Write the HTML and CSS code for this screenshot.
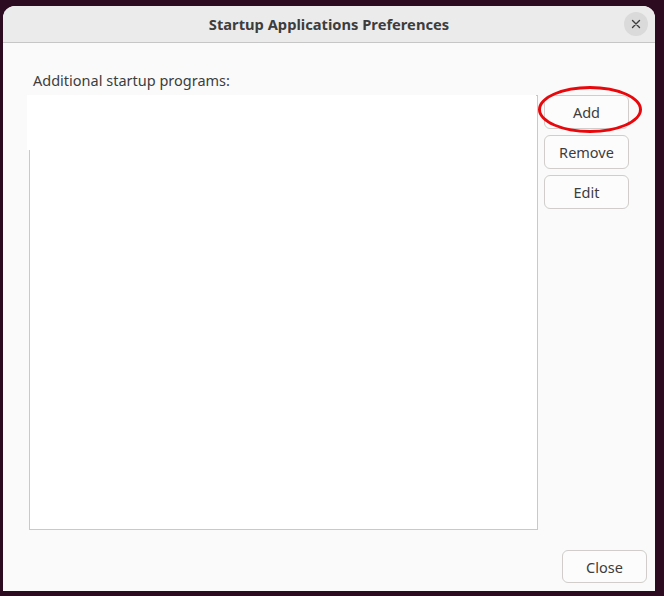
FILE: index.html
```html
<!DOCTYPE html>
<html>
<head>
<meta charset="utf-8">
<link rel="stylesheet" href="styles.css">
</head>
<body>
<div class="window">
  <div class="header">
    <div class="title">Startup Applications Preferences</div>
    <button class="wclose" aria-label="Close">
      <svg width="10" height="10" viewBox="0 0 10 10"><path d="M1.5 1.5 L8.5 8.5 M8.5 1.5 L1.5 8.5" stroke="#3d3d3d" stroke-width="1.4" stroke-linecap="round"/></svg>
    </button>
  </div>
  <div class="main">
    <div class="label">Additional startup programs:</div>
    <div class="row">
      <div class="list"></div>
      <div class="buttons">
        <button class="btn">Add</button>
        <button class="btn">Remove</button>
        <button class="btn">Edit</button>
      </div>
    </div>
  </div>
  <div class="footer">
    <button class="btn">Close</button>
  </div>
  <div class="patch"></div>
  <div class="ring"></div>
</div>
</body>
</html>
```
FILE: styles.css
```css
html, body {
  margin: 0;
  padding: 0;
}
body {
  background: #2c0b20;
  width: 664px;
  height: 596px;
  overflow: hidden;
  font-family: "Noto Sans", "DejaVu Sans", sans-serif;
  color: #3d3d3d;
}
.window {
  position: relative;
  margin: 6px 0 0 3px;
  width: 652px;
  height: 585px;
  background: #fafafa;
  border-radius: 12px 12px 0 0;
  display: flex;
  flex-direction: column;
  overflow: hidden;
}
.header {
  height: 36px;
  background: #ebebeb;
  border-bottom: 1px solid #c6c6c6;
  display: flex;
  align-items: center;
  justify-content: center;
  position: relative;
  flex: none;
}
.title {
  font-weight: bold;
  font-size: 14.7px;
  color: #3d3d3d;
}
.wclose {
  position: absolute;
  right: 7px;
  top: 6px;
  width: 24px;
  height: 24px;
  border-radius: 50%;
  border: none;
  background: #dadada;
  padding: 0;
  display: flex;
  align-items: center;
  justify-content: center;
}
.main {
  flex: 1;
  padding: 29px 26px 0 26px;
  display: flex;
  flex-direction: column;
  gap: 6px;
}
.label {
  font-size: 14.5px;
  line-height: 17px;
  padding-left: 4px;
}
.row {
  flex: 1;
  display: flex;
  gap: 6px;
}
.list {
  width: 507px;
  height: 433px;
  background: #ffffff;
  border: 1px solid #c9c9c9;
}
.buttons {
  display: flex;
  flex-direction: column;
  gap: 6px;
}
.btn {
  width: 85px;
  height: 34px;
  box-sizing: border-box;
  border: 1px solid #d0cdca;
  border-radius: 6px;
  background: #fcfcfc;
  font-family: "Noto Sans", "DejaVu Sans", sans-serif;
  font-size: 14.5px;
  color: #3d3d3d;
  padding: 0;
}
.footer {
  flex: none;
  display: flex;
  justify-content: flex-end;
  padding: 20px 8px 8px 8px;
}
.footer .btn {
  height: 33px;
}
.patch {
  position: absolute;
  left: 24px;
  top: 89px;
  width: 509px;
  height: 55px;
  background: #ffffff;
}
.ring {
  position: absolute;
  left: 535px;
  top: 80px;
  width: 98px;
  height: 41px;
  border: 3px solid #e8080c;
  border-radius: 50%;
}
```
